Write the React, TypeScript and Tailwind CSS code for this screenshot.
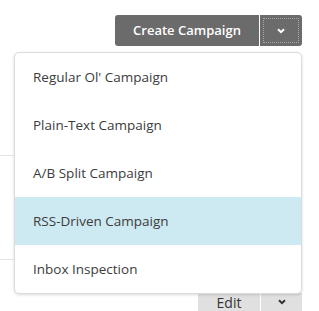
import { useState } from 'react';

const items = [
  "Regular Ol' Campaign",
  'Plain-Text Campaign',
  'A/B Split Campaign',
  'RSS-Driven Campaign',
  'Inbox Inspection',
];

function Caret({ className }: { className?: string }) {
  return (
    <svg width="8" height="6" viewBox="0 0 8 6" className={className}>
      <path d="M1 1.2l3 3 3-3" fill="none" stroke="currentColor" strokeWidth="2" />
    </svg>
  );
}

export default function App() {
  const [hovered, setHovered] = useState(3);

  return (
    <div className="relative w-[319px] h-[311px] overflow-hidden bg-white" style={{ fontFamily: '"Open Sans", sans-serif' }}>
      {/* 背景の表 */}
      <div className="absolute left-0 top-[155px] w-[14px] h-px bg-[#e4e4e4]" />
      <div className="absolute left-0 top-[259px] w-[14px] h-px bg-[#e4e4e4]" />
      <div className="absolute left-[198px] top-[293px] w-[104px] h-[18px] bg-[#e0e0e0] flex text-[#333]">
        <div className="w-[62px] flex justify-center items-center text-[14px] leading-none pt-[2px]">Edit</div>
        <div className="w-px bg-white" />
        <div className="flex-1 flex justify-center items-center">
          <Caret />
        </div>
      </div>

      {/* ボタン */}
      <div className="absolute left-[115px] top-[15px] flex h-[31px]">
        <button className="w-[144px] h-full bg-[#6b6b6b] text-white text-[13px] font-semibold rounded-l-[3px]">
          Create Campaign
        </button>
        <div className="w-px bg-white" />
        <button className="w-[42px] h-full bg-[#6b6b6b] text-white rounded-r-[3px] p-[3px]">
          <div className="w-full h-full border border-dotted border-[#a8a8a8] flex items-center justify-center">
            <Caret />
          </div>
        </button>
      </div>

      {/* メニュー */}
      <div className="absolute left-[14px] top-[52px] w-[288px] border border-[#dcdcdc] rounded-[5px] bg-white shadow-[0_1px_3px_rgba(0,0,0,0.15)] overflow-hidden">
        {items.map((item, i) => (
          <div
            key={item}
            onMouseEnter={() => setHovered(i)}
            className={`h-[48px] flex items-center pl-[18px] text-[13.5px] text-[#3c3c3c] ${hovered === i ? 'bg-[#cde9f1]' : ''}`}
          >
            {item}
          </div>
        ))}
      </div>
    </div>
  );
}
